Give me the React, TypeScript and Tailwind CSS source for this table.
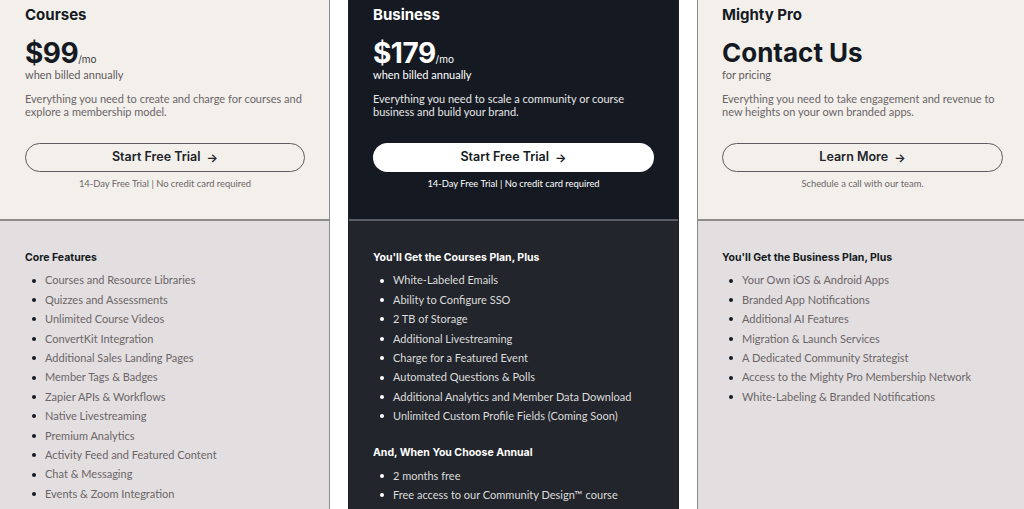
import React from 'react'

type Plan = {
  name: string
  price?: string
  headline?: string
  note: string
  description: string
  cta: string
  footnote: string
  groups: { title: string; items: string[] }[]
  dark?: boolean
}

const plans: Plan[] = [
  {
    name: 'Courses',
    price: '$99',
    note: 'when billed annually',
    description: 'Everything you need to create and charge for courses and explore a membership model.',
    cta: 'Start Free Trial',
    footnote: '14-Day Free Trial | No credit card required',
    groups: [
      {
        title: 'Core Features',
        items: [
          'Courses and Resource Libraries',
          'Quizzes and Assessments',
          'Unlimited Course Videos',
          'ConvertKit Integration',
          'Additional Sales Landing Pages',
          'Member Tags & Badges',
          'Zapier APIs & Workflows',
          'Native Livestreaming',
          'Premium Analytics',
          'Activity Feed and Featured Content',
          'Chat & Messaging',
          'Events & Zoom Integration',
        ],
      },
    ],
  },
  {
    name: 'Business',
    price: '$179',
    note: 'when billed annually',
    description: 'Everything you need to scale a community or course business and build your brand.',
    cta: 'Start Free Trial',
    footnote: '14-Day Free Trial | No credit card required',
    dark: true,
    groups: [
      {
        title: "You'll Get the Courses Plan, Plus",
        items: [
          'White-Labeled Emails',
          'Ability to Configure SSO',
          '2 TB of Storage',
          'Additional Livestreaming',
          'Charge for a Featured Event',
          'Automated Questions & Polls',
          'Additional Analytics and Member Data Download',
          'Unlimited Custom Profile Fields (Coming Soon)',
        ],
      },
      {
        title: 'And, When You Choose Annual',
        items: ['2 months free', 'Free access to our Community Design™ course'],
      },
    ],
  },
  {
    name: 'Mighty Pro',
    headline: 'Contact Us',
    note: 'for pricing',
    description: 'Everything you need to take engagement and revenue to new heights on your own branded apps.',
    cta: 'Learn More',
    footnote: 'Schedule a call with our team.',
    groups: [
      {
        title: "You'll Get the Business Plan, Plus",
        items: [
          'Your Own iOS & Android Apps',
          'Branded App Notifications',
          'Additional AI Features',
          'Migration & Launch Services',
          'A Dedicated Community Strategist',
          'Access to the Mighty Pro Membership Network',
          'White-Labeling & Branded Notifications',
        ],
      },
    ],
  },
]

function PlanCard({ plan, first }: { plan: Plan; first: boolean }) {
  const dark = plan.dark
  const pad = first ? 'pl-[25px]' : 'pl-[24px]'
  return (
    <div
      className={`shrink-0 flex flex-col ${first ? 'w-[330px] border-r' : 'w-[331px] border-x'} ${
        dark ? 'border-[#1b1f26]' : 'border-[#8e8b8c]'
      }`}
    >
      <div
        className={`h-[221px] shrink-0 pr-[24px] ${pad} pt-[5px] border-b-2 ${
          dark ? 'bg-[#151a22] border-[#5a5d63]' : 'bg-[#f3f0ec] border-[#8e8b8c]'
        }`}
      >
        <h2
          className={`text-[15px] leading-[20px] font-bold ${dark ? 'text-white' : 'text-[#151a22]'}`}
          style={{ fontFamily: 'Inter, sans-serif' }}
        >
          {plan.name}
        </h2>
        <div className="mt-[13px] flex items-baseline h-[30px]" style={{ fontFamily: 'Inter, sans-serif' }}>
          {plan.price ? (
            <>
              <span
                className={`text-[28px] leading-[30px] font-bold tracking-[-0.5px] ${
                  dark ? 'text-white' : 'text-[#151a22]'
                }`}
              >
                {plan.price}
              </span>
              <span className={`text-[10px] ${dark ? 'text-white' : 'text-[#3b3a3d]'}`}>/mo</span>
            </>
          ) : (
            <span className="text-[26px] leading-[30px] font-bold text-[#151a22]">{plan.headline}</span>
          )}
        </div>
        <p className={`text-[11px] leading-[14px] ${dark ? 'text-white' : 'text-[#5f5a5c]'}`}>{plan.note}</p>
        <p
          className={`mt-[10px] text-[11px] leading-[13px] ${dark ? 'text-[#e6e6e6]' : 'text-[#6b6567]'}`}
        >
          {plan.description}
        </p>
        <button
          className={`mt-[25px] w-full h-[29px] rounded-full text-[12.5px] font-semibold flex items-center justify-center gap-[6px] ${
            dark ? 'bg-white text-[#151a22]' : 'border border-[#5d5b5e] text-[#222328]'
          }`}
          style={{ fontFamily: 'Inter, sans-serif' }}
        >
          {plan.cta}
          <span className="text-[12px]">→</span>
        </button>
        <p
          className={`mt-[5px] text-center text-[9.4px] leading-[14px] ${dark ? 'text-white' : 'text-[#6b6567]'}`}
        >
          {plan.footnote}
        </p>
      </div>
      <div className={`flex-1 pr-[24px] ${pad} pt-[30px] ${dark ? 'bg-[#22252b]' : 'bg-[#e3dfe0]'}`}>
        {plan.groups.map((g, gi) => (
          <div key={g.title} className={gi > 0 ? 'mt-[20px]' : ''}>
            <h3
              className={`text-[10.5px] leading-[14px] font-bold ${dark ? 'text-white' : 'text-[#151a22]'}`}
              style={{ fontFamily: 'Inter, sans-serif' }}
            >
              {g.title}
            </h3>
            <ul className="mt-[6px]">
              {g.items.map((item) => (
                <li
                  key={item}
                  className={`flex items-center h-[19.4px] pl-[7px] text-[11px] ${
                    dark ? 'text-[#dcdcdc]' : 'text-[#6b6567]'
                  }`}
                >
                  <span
                    className={`w-[4px] h-[4px] rounded-full mr-[9px] shrink-0 ${dark ? 'bg-white' : 'bg-[#151a22]'}`}
                  />
                  {item}
                </li>
              ))}
            </ul>
          </div>
        ))}
      </div>
    </div>
  )
}

export default function App() {
  return (
    <div
      className="w-[1024px] h-[509px] overflow-hidden bg-white flex gap-[18px]"
      style={{ fontFamily: 'Lato, sans-serif' }}
    >
      {plans.map((p, i) => (
        <PlanCard key={p.name} plan={p} first={i === 0} />
      ))}
    </div>
  )
}
